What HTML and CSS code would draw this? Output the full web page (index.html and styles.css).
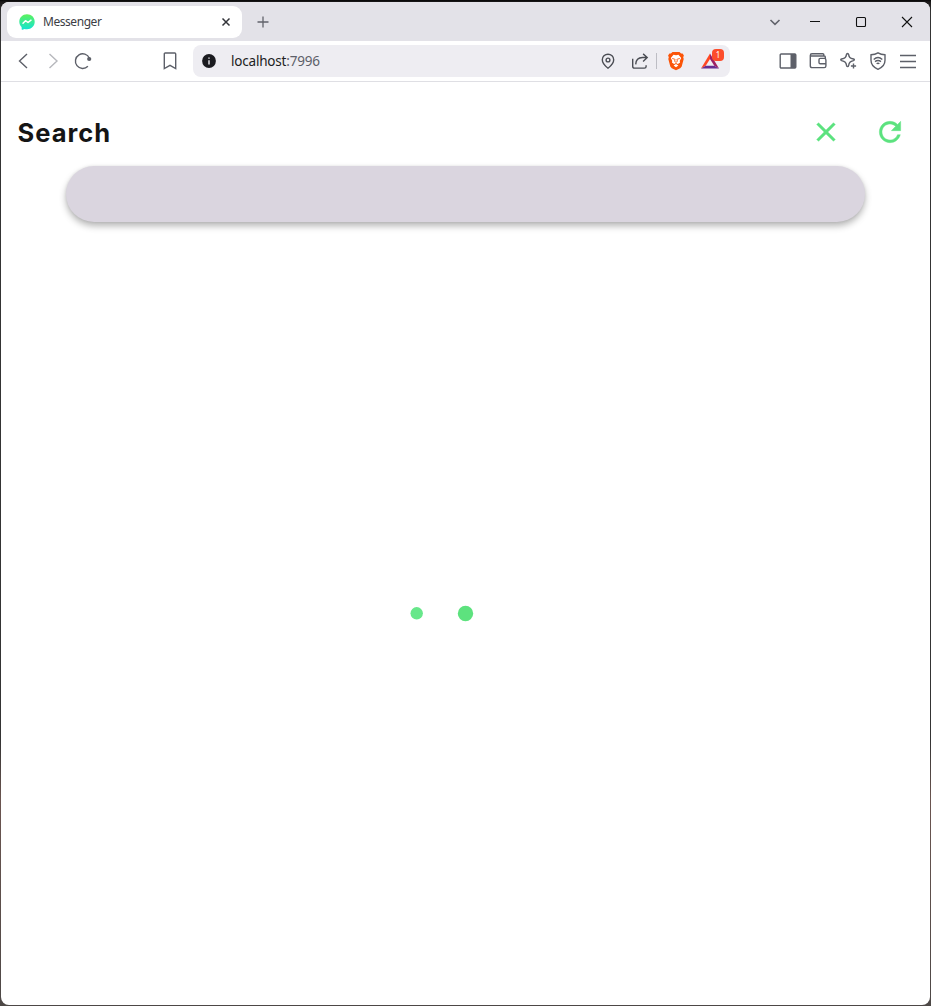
FILE: index.html
```html
<!DOCTYPE html>
<html lang="en">
<head>
<meta charset="utf-8">
<title>Messenger</title>
<link rel="stylesheet" href="styles.css">
</head>
<body>
<div class="window">
  <header class="tabstrip">
    <div class="tab">
      <svg class="favicon" viewBox="0 0 16 16"><defs><linearGradient id="msg" x1="0" y1="0" x2="0" y2="1"><stop offset="0" stop-color="#5df25c"/><stop offset="1" stop-color="#12e3d4"/></linearGradient></defs><path fill="url(#msg)" d="M8 0.3C3.6.3.3 3.500.3 7.700c0 2.200.9 4 2.300 5.300l.1 2.200c0 .5.500.7.9.5l1.900-.8c.8.2 1.600.3 2.500.3 4.400 0 7.700-3.200 7.700-7.500S12.400.3 8 .3z"/><path d="M4 9.300 6.500 6.700 9 8.500 12 6.200" fill="none" stroke="#fff" stroke-width="1.500" stroke-linejoin="round" stroke-linecap="round"/></svg>
      <span class="tab-title">Messenger</span>
      <svg class="tab-close" viewBox="0 0 16 16"><path d="M4.500 4.500l7 7M11.500 4.500l-7 7"/></svg>
    </div>
    <svg class="new-tab" viewBox="0 0 16 16"><path d="M8 2.500v11M2.500 8h11"/></svg>
    <svg class="tab-menu" viewBox="0 0 16 16"><path d="M3.500 6 8 10.300 12.500 6"/></svg>
    <div class="controls">
      <svg viewBox="0 0 12 12"><path d="M1 5.500h10"/></svg>
      <svg viewBox="0 0 12 12"><rect x="1.500" y="1.500" width="9" height="9" rx="1"/></svg>
      <svg viewBox="0 0 12 12"><path d="M1 1l10 10M11 1 1 11"/></svg>
    </div>
  </header>
  <nav class="toolbar">
    <div class="icons">
      <svg viewBox="0 0 20 20"><path d="M14 3 6.500 10l7.500 7"/></svg>
      <svg class="disabled" viewBox="0 0 20 20"><path d="M6.500 3 14 10l-7.500 7"/></svg>
      <svg viewBox="0 0 20 20"><path d="M14.900 15.300A7.300 7.300 0 1 1 16.400 7.200"/><circle class="solid" cx="16.200" cy="8" r="2.100"/></svg>
    </div>
    <div class="icons bookmark">
      <svg viewBox="0 0 20 20"><path d="M5.200 2h9.600q.9 0 .9.900v14.600l-5.700-3.200-5.700 3.200V2.900q0-.9.900-.9z"/></svg>
    </div>
    <div class="address">
      <svg class="info" viewBox="0 0 16 16"><circle cx="8" cy="8" r="6.900" fill="#1b1b20"/><path d="M8 7.300v4.200M8 4.500v1.300" stroke="#eeedf2" stroke-width="1.400"/></svg>
      <span class="url">localhost<span class="port">:7996</span></span>
      <svg class="pin" viewBox="0 0 20 20"><path d="M10 17.200C7.300 15.100 4.300 12.100 4.300 8.700a5.700 5.500 0 0 1 11.400 0c0 3.400-3 6.400-5.700 8.500z"/><circle cx="10" cy="9" r="1.900"/></svg>
      <svg class="share" viewBox="0 0 20 20"><path d="M2.700 7.800v7.400q0 1.900 1.900 1.900h9.800q1.700 0 1.700-1.700v-1.200M5.700 13.400c.2-4.300 2.500-6.900 6.800-6.900h4.200M13.100 2.900l4.100 3.600-4.100 3.900"/></svg>
      <span class="divider"></span>
      <svg class="brave" viewBox="0 0 20 20"><path fill="#fb5408" d="M6.500 1h7l1.600 1.500 1.500-.1 1.300 2.200-.7 1.700.5 1.700-2 7.500-1.500 1.700L10 19.200l-4.200-2-1.500-1.700L2.300 8l.5-1.700-.7-1.700 1.300-2.200 1.500.1z"/><path fill="#fff" d="M7.500 3.700 10 4.200l2.500-.5 2.700 3.200-1.500 3 .4 1.600-2.200 1.400-1.900-1-1.900 1-2.200-1.400.4-1.600-1.500-3z"/><path fill="#fff" d="M10 13.100l2.400 1.300-2.400 1.900-2.400-1.900z"/><path d="M6.200 7.500l2.600.7M13.800 7.500l-2.600.7M9.100 8.200l-.5 2.200 1.400.9 1.400-.9-.5-2.200" fill="none" stroke="#fb5408" stroke-width=".9"/></svg>
      <span class="rewards">
        <svg viewBox="0 0 20 20"><path fill="#ff4724" d="M10 2.500 1 17.500l4.700-2.700L10 8z"/><path fill="#9e1f63" d="M10 2.500l9 15-4.700-2.700L10 8z"/><path fill="#662d91" d="M1 17.500h18l-4.700-2.700H5.700z"/></svg>
        <b class="badge">1</b>
      </span>
    </div>
    <div class="icons actions">
      <svg viewBox="0 0 20 20"><rect x="2.200" y="3" width="15.600" height="14" rx="1"/><path class="solid" d="M12.500 3h5.300v14h-5.300z"/></svg>
      <svg viewBox="0 0 20 20"><path d="M17.300 7.300V6q0-1-1-1H3M15.800 5V3.700q0-1-1-1H4Q2.300 2.700 2.300 4.400v10.300q0 1.900 1.900 1.900h12q1.700 0 1.700-1.700V9q0-1.600-1.600-1.600h-4q-1.300 0-1.300 1.300v2.700q0 1.300 1.300 1.300h5.500"/></svg>
      <svg viewBox="0 0 20 20"><path d="M9.500 2.500q.9 0 1.100 1c.5 2.700 1.100 3.500 4.900 4.500q1.700.7 0 1.600c-3.500.9-4.400 1.800-4.900 5-.3 1.400-1.700 1.400-2 0-.5-3.200-1.400-4.100-5-5q-1.700-.9 0-1.600c3.700-1 4.400-1.800 4.900-4.500q.2-1 1-1z"/><path d="M15.500 12.400v5.200M12.900 15h5.200"/></svg>
      <svg viewBox="0 0 20 20"><path d="M10 1.800c2.300 1.300 4.400 1.800 7 2v5.500c0 4.500-3 7.400-7 9-4-1.600-7-4.500-7-9V3.800c2.600-.2 4.700-.7 7-2zM5.700 8.400c2.600-2.300 6-2.300 8.600 0M7 10.600c1.900-1.500 4.100-1.500 6 0M8.600 12.700q1.400-1 2.800 0"/></svg>
      <svg viewBox="0 0 20 20"><path d="M2 4.500h16M2 10.500h16M2 16.500h16"/></svg>
    </div>
  </nav>
  <main class="page">
    <div class="heading">
      <h1>Search</h1>
      <svg viewBox="0 0 24 24"><path d="M19 6.410 17.590 5 12 10.590 6.410 5 5 6.410 10.590 12 5 17.590 6.410 19 12 13.410 17.590 19 19 17.590 13.410 12z"/></svg>
      <svg viewBox="0 0 24 24"><path d="M17.650 6.350C16.200 4.900 14.210 4 12 4c-4.420 0-7.990 3.580-7.990 8s3.570 8 7.990 8c3.730 0 6.840-2.550 7.730-6h-2.080c-.82 2.330-3.040 4-5.650 4-3.310 0-6-2.690-6-6s2.690-6 6-6c1.660 0 3.140.69 4.220 1.780L13 11h7V4l-2.350 2.350z"/></svg>
    </div>
    <div class="searchbar"></div>
    <div class="loader">
      <svg viewBox="0 0 110 20"><circle cx="26.700" cy="10.300" r="6.200" fill="#67e78a"/><circle cx="75.500" cy="10.500" r="7.700" fill="#5de27e"/></svg>
    </div>
  </main>
</div>
</body>
</html>
```
FILE: styles.css
```css
* { box-sizing: border-box; }
body {
  margin: 0;
  height: 1006px;
  padding: 2px 1px 1px;
  background: linear-gradient(#050505 0, #1c1a1a 2px, #343434 12px, #343434 740px, #6b5550 800px, #4d4846 1006px);
  overflow: hidden;
  font-family: "Noto Sans", sans-serif;
}
svg { display: block; flex: none; }
.window {
  height: 1003px;
  display: flex;
  flex-direction: column;
  background: #fff;
  border-radius: 8px;
  overflow: hidden;
}
.tabstrip {
  height: 39px;
  flex: none;
  display: flex;
  align-items: center;
  padding-left: 6px;
  background: #e3e2e8;
}
.tab {
  width: 235px;
  height: 32px;
  display: flex;
  align-items: center;
  padding: 0 8px 0 12px;
  background: #fff;
  border-radius: 9px;
}
.favicon { width: 16px; height: 16px; }
.tab-title { flex: 1; margin-left: 8px; font-size: 12px; line-height: 16px; letter-spacing: -.45px; color: #3c3d45; }
.tab-close, .new-tab, .tab-menu { width: 16px; height: 16px; fill: none; }
.tab-close { stroke: #33343a; stroke-width: 1.5; }
.new-tab { margin-left: 13px; stroke: #62636b; stroke-width: 1.3; }
.tab-menu { margin-left: auto; stroke: #62636b; stroke-width: 1.6; }
.controls { display: flex; margin-left: 9px; }
.controls svg { width: 46px; height: 12px; fill: none; stroke: #111; stroke-width: 1.1; }
.toolbar {
  height: 41px;
  flex: none;
  display: flex;
  align-items: center;
  padding: 0 7px;
  border-bottom: 1px solid #dfdfe4;
}
.icons { display: flex; }
.icons svg { width: 30px; height: 20px; fill: none; stroke: #5d6069; stroke-width: 1.4; }
.icons .disabled { stroke: #b7b8bd; }
.icons .solid { fill: #5d6069; stroke: none; }
.bookmark { margin-left: 57px; }
.address {
  width: 537px;
  height: 32px;
  margin-left: 8px;
  display: flex;
  align-items: center;
  padding: 0 10px 0 8px;
  background: #eeedf2;
  border-radius: 8px;
}
.info { width: 16px; height: 16px; }
.url { flex: 1; margin-left: 14px; font-size: 13.5px; line-height: 20px; letter-spacing: -.2px; color: #1d1d22; }
.port { color: #5d6069; }
.pin, .share { width: 20px; height: 20px; fill: none; stroke: #4b4d54; stroke-width: 1.4; }
.share { margin-left: 12px; }
.divider { width: 1px; height: 16px; margin: 0 9px 0 6px; background: #bdbdc4; }
.brave { width: 20px; height: 20px; }
.rewards { position: relative; margin-left: 14px; }
.rewards svg { width: 20px; height: 20px; }
.badge {
  position: absolute;
  left: 12px;
  top: -2px;
  width: 12px;
  height: 12px;
  border-radius: 4px;
  background: #fc4c2b;
  color: #fff;
  font: 8px/12px "Noto Sans", sans-serif;
  text-align: center;
}
.actions { margin-left: auto; }
.page { flex: 1; display: flex; flex-direction: column; }
.heading { display: flex; align-items: center; height: 64px; margin-top: 18px; padding: 0 8px 0 16.5px; }
h1 {
  flex: 1;
  margin: 0;
  padding-top: 2px;
  font: 650 25.5px/32px Inter, sans-serif;
  font-optical-sizing: none;
  letter-spacing: 1px;
  color: #151515;
}
.heading svg { width: 64px; height: 32px; fill: #5ce27f; stroke: #5ce27f; stroke-width: .3; }
.searchbar {
  height: 56px;
  margin: 2px 65px 0 64.5px;
  border-radius: 28px;
  background: #dad5df;
  box-shadow: 0 4px 7px rgba(0, 0, 0, .29), 0 0 3px rgba(0, 0, 0, .08);
}
.loader { margin: 381px 0 0 389px; }
.loader svg { width: 110px; height: 20px; }
```
